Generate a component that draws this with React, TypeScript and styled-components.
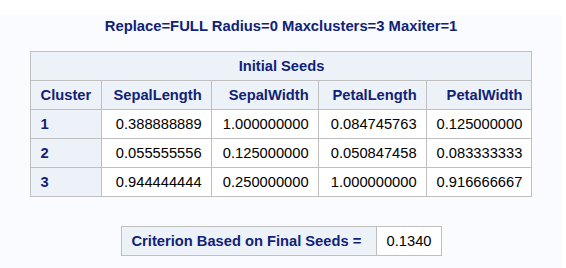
import React from 'react';
import styled, { createGlobalStyle } from 'styled-components';

const GlobalStyle = createGlobalStyle`
  html, body {
    margin: 0;
    padding: 0;
    background: #ffffff;
  }
  body {
    font-family: "Liberation Sans", Arial, sans-serif;
  }
`;

const Page = styled.div`
  margin-top: 15px;
  width: 562px;
  min-height: 253px;
  padding-top: 3px;
  box-sizing: border-box;
  background: #fafbfe;
  display: flex;
  flex-direction: column;
  align-items: center;
`;

const Title = styled.div`
  font-size: 14.8px;
  line-height: 17px;
  font-weight: bold;
  color: #112277;
  margin-bottom: 16px;
`;

const Table = styled.table<{ $gap?: number }>`
  border-collapse: separate;
  border-spacing: 0;
  table-layout: fixed;
  border-top: 1px solid #bfbfbf;
  border-left: 1px solid #bfbfbf;
  margin-bottom: ${p => p.$gap ?? 0}px;
  font-size: 14.7px;
`;

const Col = styled.col<{ $w: number }>`
  width: ${p => p.$w}px;
`;

const Cell = styled.td<{ $align?: string }>`
  box-sizing: border-box;
  height: 29px;
  padding: 0 9px 0 10px;
  border-right: 1px solid #bfbfbf;
  border-bottom: 1px solid #bfbfbf;
  background: #ffffff;
  color: #000000;
  text-align: ${p => p.$align ?? 'right'};
  white-space: nowrap;
  overflow: hidden;
`;

const Head = styled(Cell).attrs({ as: 'th' })`
  background: #edf2f9;
  color: #112277;
  font-weight: bold;
`;

const cols = [
  { name: 'Cluster', w: 71, align: 'left' },
  { name: 'SepalLength', w: 110 },
  { name: 'SepalWidth', w: 107 },
  { name: 'PetalLength', w: 108 },
  { name: 'PetalWidth', w: 105 },
];

const rows = [
  ['1', '0.388888889', '1.000000000', '0.084745763', '0.125000000'],
  ['2', '0.055555556', '0.125000000', '0.050847458', '0.083333333'],
  ['3', '0.944444444', '0.250000000', '1.000000000', '0.916666667'],
];

export default function App() {
  return (
    <>
      <GlobalStyle />
      <Page>
        <Title>Replace=FULL Radius=0 Maxclusters=3 Maxiter=1</Title>
        <Table $gap={29}>
          <colgroup>
            {cols.map(c => (
              <Col key={c.name} $w={c.w} />
            ))}
          </colgroup>
          <thead>
            <tr>
              <Head colSpan={5} $align="center">
                Initial Seeds
              </Head>
            </tr>
            <tr>
              {cols.map(c => (
                <Head key={c.name} $align={c.align}>
                  {c.name}
                </Head>
              ))}
            </tr>
          </thead>
          <tbody>
            {rows.map(r => (
              <tr key={r[0]}>
                <Head $align="left">{r[0]}</Head>
                {r.slice(1).map((v, i) => (
                  <Cell key={i}>{v}</Cell>
                ))}
              </tr>
            ))}
          </tbody>
        </Table>
        <Table>
          <colgroup>
            <Col $w={255} />
            <Col $w={65} />
          </colgroup>
          <tbody>
            <tr>
              <Head $align="left">Criterion Based on Final Seeds =</Head>
              <Cell>0.1340</Cell>
            </tr>
          </tbody>
        </Table>
      </Page>
    </>
  );
}
